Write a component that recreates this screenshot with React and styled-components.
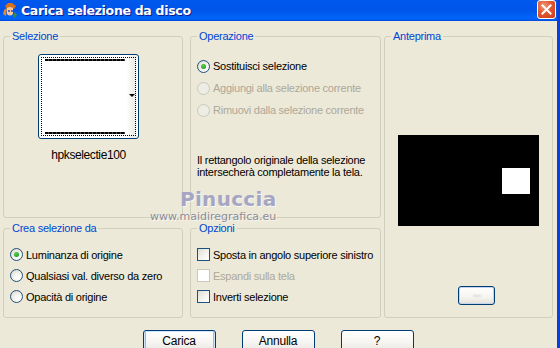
import React from 'react';
import styled, { createGlobalStyle } from 'styled-components';

const Global = createGlobalStyle`
  html, body { margin: 0; padding: 0; background: #ECE9D8; }
  body {
    font-family: Tahoma, "Liberation Sans", Arial, sans-serif;
    font-size: 11px;
    letter-spacing: -0.25px;
    color: #000;
  }
`;

const Window = styled.div`
  position: relative;
  width: 560px;
  height: 348px;
  overflow: hidden;
  display: flex;
  flex-direction: column;
  background: #ECE9D8;
  box-sizing: border-box;
  border-right: 3px solid #0A3FD8;
`;

const TitleBar = styled.div`
  height: 21px;
  flex: none;
  display: flex;
  align-items: center;
  padding-left: 2px;
  background: linear-gradient(to bottom, #0058EE 0%, #0055E9 50%, #0062F8 80%, #0066FF 90%, #0046D8 100%);
`;

const Title = styled.span`
  margin-left: 3px;
  color: #fff;
  font-family: "DejaVu Sans", "Liberation Sans", sans-serif;
  font-weight: bold;
  font-size: 12.5px;
  letter-spacing: -0.3px;
  text-shadow: 1px 1px 0 #0A1E8C;
  flex: 1;
`;

const CloseBtn = styled.div`
  width: 19px;
  height: 19px;
  margin-right: 1px;
  margin-top: -3px;
  box-sizing: border-box;
  border: 1px solid #fff;
  border-radius: 3px;
  background: radial-gradient(circle at 35% 30%, #F09A7C 0%, #E0572F 45%, #C7401B 100%);
  display: flex;
  align-items: center;
  justify-content: center;
`;

const Body = styled.div`
  padding: 9px 0 0 3px;
  display: flex;
  flex-direction: column;
`;

const Panels = styled.div`
  display: grid;
  grid-template-columns: 180px 7px 191px 3px 169px;
  grid-template-rows: 188px 96px;
  row-gap: 4px;
`;

const Group = styled.fieldset`
  grid-column: ${p => p.$col};
  grid-row: ${p => p.$row};
  margin: 0;
  padding: 0 0 0 6px;
  border: 1px solid #D0D0BF;
  border-radius: 3px;
  min-width: 0;
  display: flex;
  flex-direction: column;
`;

const Legend = styled.legend`
  margin-left: 0;
  padding: 0 2px;
  color: #0046D5;
  font-size: 11px;
  line-height: 13px;
`;

const ThumbWrap = styled.div`
  margin: 11px 0 0 28px;
  display: flex;
  flex-direction: column;
  align-items: center;
  width: 101px;
`;

const Thumb = styled.div`
  position: relative;
  width: 101px;
  height: 85px;
  box-sizing: border-box;
  border: 1px solid #003C74;
  border-radius: 3px;
  background: linear-gradient(to right, #fff 0%, #fff 88%, #EDECE6 96%, #fff 100%);
  padding: 2px;
`;

const Focus = styled.div`
  height: 100%;
  box-sizing: border-box;
  border: 1px dotted #000;
  display: flex;
  flex-direction: column;
  justify-content: space-between;
  padding: 1px 0 1px 3px;
`;

const DashLine = styled.div`
  width: 80px;
  height: 2px;
  background: repeating-linear-gradient(to right, #000 0 3px, #444 3px 4px);
`;

const Arrow = styled.div`
  position: absolute;
  right: 3px;
  top: 39px;
  width: 0;
  height: 0;
  border-left: 3px solid transparent;
  border-right: 3px solid transparent;
  border-top: 3px solid #000;
`;

const Caption = styled.div`
  margin-top: 9px;
  font-size: 12px;
  letter-spacing: -0.4px;
  line-height: 14px;
`;

const Options = styled.div`
  display: flex;
  flex-direction: column;
  padding-top: ${p => p.$pt}px;
`;

const Row = styled.label`
  display: flex;
  align-items: center;
  height: ${p => p.$h}px;
  gap: 3px;
  color: ${p => (p.$disabled ? '#ACA899' : '#000')};
  white-space: nowrap;
`;

const Radio = styled.span`
  width: 13px;
  height: 13px;
  flex: none;
  box-sizing: border-box;
  border-radius: 50%;
  border: 1px solid ${p => (p.$disabled ? '#CAC8BB' : '#1C5180')};
  background: ${p => (p.$disabled
    ? '#EEEDE5'
    : 'radial-gradient(circle at 65% 70%, #fff 0%, #F4F3EE 40%, #D6D2C2 100%)')};
  display: flex;
  align-items: center;
  justify-content: center;
  &::after {
    content: '';
    display: ${p => (p.$checked ? 'block' : 'none')};
    width: 5px;
    height: 5px;
    border-radius: 50%;
    background: radial-gradient(circle at 40% 35%, #55D655 0%, #21A121 70%);
  }
`;

const Check = styled.span`
  width: 13px;
  height: 13px;
  flex: none;
  box-sizing: border-box;
  border: 1px solid ${p => (p.$disabled ? '#CAC8BB' : '#1C5180')};
  background: ${p => (p.$disabled
    ? '#fff'
    : 'linear-gradient(135deg, #DCDBD5 0%, #F2F1EC 50%, #fff 100%)')};
`;

const Info = styled.div`
  margin-top: 33px;
  line-height: 12px;
`;

const Preview = styled.div`
  position: relative;
  margin: 92px 0 0 7px;
  width: 141px;
  height: 91px;
  background: #000;
`;

const Sel = styled.div`
  position: absolute;
  left: 104px;
  top: 33px;
  width: 28px;
  height: 26px;
  background: #fff;
`;

const SmallBtn = styled.div`
  margin: 60px 0 0 67px;
  width: 37px;
  height: 19px;
  box-sizing: border-box;
  border: 1px solid #003C74;
  border-radius: 3px;
  background: linear-gradient(to bottom, #fff 0%, #F5F4EF 60%, #E3E1D6 100%);
  box-shadow: inset 0 0 0 1px #C3D4F2;
  display: flex;
  align-items: center;
  justify-content: center;
  color: #E4E4E4;
  font-size: 10px;
  letter-spacing: -1px;
`;

const Buttons = styled.div`
  display: flex;
  justify-content: center;
  gap: 26px;
  margin-top: 12px;
  padding-right: 4px;
`;

const Button = styled.button`
  width: 73px;
  height: 23px;
  padding: 0 0 2px;
  font-family: inherit;
  font-size: 12px;
  letter-spacing: -0.2px;
  color: #000;
  border: 1px solid #003C74;
  border-radius: 3px;
  background: linear-gradient(to bottom, #fff 0%, #F7F6F2 50%, #ECEBE6 85%, #D6D0C5 100%);
  box-shadow: ${p => (p.$default ? 'inset 0 0 0 1px #CEE7FF, inset 0 -1px 0 2px #98B8EA' : 'none')};
`;

const Watermark = styled.div`
  position: absolute;
  left: ${p => p.$x}px;
  top: ${p => p.$y}px;
  font-family: "DejaVu Sans", sans-serif;
  font-size: ${p => p.$size}px;
  font-weight: ${p => p.$weight || 'normal'};
  color: ${p => p.$color};
  letter-spacing: ${p => p.$ls || 0}px;
  line-height: 1;
  text-shadow: 1px 1px 0 rgba(255,255,255,0.7);
  pointer-events: none;
`;

function AppIcon() {
  return (
    <svg width="16" height="17" viewBox="0 0 16 17">
      <path d="M3 4 L6 1 L10 1 L14 4 L12 7 L9 5 L5 7 Z" fill="#D8731C" />
      <path d="M5 6 Q8 4 11 6 L11 12 Q8 15 5 12 Z" fill="#F6C89B" />
      <circle cx="7" cy="9" r="1" fill="#1E4CC8" />
      <circle cx="10" cy="9" r="1" fill="#1E4CC8" />
      <path d="M2 8 L5 6 L4 14 L1 12 Z" fill="#E08A2A" />
      <path d="M11 14 L13 10 L15 13 L12 16 Z" fill="#3A8E3A" />
    </svg>
  );
}

export default function App() {
  return (
    <>
      <Global />
      <Window>
        <TitleBar>
          <AppIcon />
          <Title>Carica selezione da disco</Title>
          <CloseBtn>
            <svg width="11" height="11" viewBox="0 0 11 11">
              <path d="M1.5 1.5 L9.5 9.5 M9.5 1.5 L1.5 9.5" stroke="#fff" strokeWidth="2" strokeLinecap="square" />
            </svg>
          </CloseBtn>
        </TitleBar>
        <Body>
          <Panels>
            <Group $col={1} $row={1}>
              <Legend>Selezione</Legend>
              <ThumbWrap>
                <Thumb>
                  <Focus>
                    <DashLine />
                    <DashLine />
                  </Focus>
                  <Arrow />
                </Thumb>
                <Caption>hpkselectie100</Caption>
              </ThumbWrap>
            </Group>

            <Group $col={3} $row={1}>
              <Legend>Operazione</Legend>
              <Options $pt={12}>
                <Row $h={22}><Radio $checked />Sostituisci selezione</Row>
                <Row $h={22} $disabled><Radio $disabled />Aggiungi alla selezione corrente</Row>
                <Row $h={22} $disabled><Radio $disabled />Rimuovi dalla selezione corrente</Row>
              </Options>
              <Info>
                Il rettangolo originale della selezione<br />
                intersecherà completamente la tela.
              </Info>
            </Group>

            <Group $col={5} $row="1 / 3">
              <Legend>Anteprima</Legend>
              <Preview>
                <Sel />
              </Preview>
              <SmallBtn>▪▪▪</SmallBtn>
            </Group>

            <Group $col={1} $row={2}>
              <Legend>Crea selezione da</Legend>
              <Options $pt={9}>
                <Row $h={21}><Radio $checked />Luminanza di origine</Row>
                <Row $h={21}><Radio />Qualsiasi val. diverso da zero</Row>
                <Row $h={21}><Radio />Opacità di origine</Row>
              </Options>
            </Group>

            <Group $col={3} $row={2}>
              <Legend>Opzioni</Legend>
              <Options $pt={9}>
                <Row $h={21}><Check />Sposta in angolo superiore sinistro</Row>
                <Row $h={21} $disabled><Check $disabled />Espandi sulla tela</Row>
                <Row $h={21}><Check />Inverti selezione</Row>
              </Options>
            </Group>
          </Panels>

          <Buttons>
            <Button $default>Carica</Button>
            <Button>Annulla</Button>
            <Button>?</Button>
          </Buttons>
        </Body>

        <Watermark $x={180} $y={189} $size={20} $weight="bold" $color="#A6A6C4" $ls={0.3}>Pinuccia</Watermark>
        <Watermark $x={150} $y={211} $size={11} $color="#8C8C98">www.maidiregrafica.eu</Watermark>
      </Window>
    </>
  );
}
